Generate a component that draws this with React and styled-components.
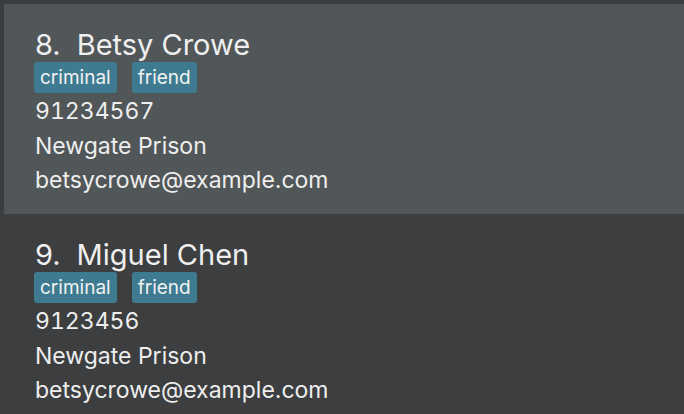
import React from 'react'
import styled, { createGlobalStyle } from 'styled-components'

const PERSONS = [
  {
    index: 8,
    name: 'Betsy Crowe',
    tags: ['criminal', 'friend'],
    phone: '91234567',
    address: 'Newgate Prison',
    email: 'betsycrowe@example.com',
  },
  {
    index: 9,
    name: 'Miguel Chen',
    tags: ['criminal', 'friend'],
    phone: '9123456',
    address: 'Newgate Prison',
    email: 'betsycrowe@example.com',
  },
]

const GlobalStyle = createGlobalStyle`
  html, body {
    margin: 0;
    padding: 0;
    height: 100%;
    overflow: hidden;
    background: #3c3e40;
  }

  body {
    font-family: Inter, "Open Sans", sans-serif;
    color: #ececec;
  }
`

export default function App() {
  return (
    <>
      <GlobalStyle />
      <PersonList>
        {PERSONS.map((p, i) => (
          <Card key={p.index} selected={i === 0}>
            <Name>
              <span className="index">{p.index}.</span>
              {p.name}
            </Name>
            <Tags>
              {p.tags.map((t) => (
                <Tag key={t}>{t}</Tag>
              ))}
            </Tags>
            <Detail numeric>{p.phone}</Detail>
            <Detail>{p.address}</Detail>
            <Detail>{p.email}</Detail>
          </Card>
        ))}
      </PersonList>
    </>
  )
}

const PersonList = styled.div`
  display: flex;
  flex-direction: column;
  padding: 4px 0 0 4px;
  height: 414px;
  box-sizing: border-box;
  background: #3b3d3f;
`

const Card = styled.div`
  display: flex;
  flex-direction: column;
  align-items: flex-start;
  height: 210px;
  flex-shrink: 0;
  box-sizing: border-box;
  padding: 24px 0 0 31px;
  background: ${(p) => (p.selected ? '#515658' : '#3c3e40')};
`

const Name = styled.div`
  font-size: 29px;
  line-height: 34px;
  color: #efefef;
  white-space: pre;

  .index {
    margin-right: 16px;
  }
`

const Tags = styled.div`
  display: flex;
  gap: 15px;
  margin: 0 0 1px -1px;
`

const Tag = styled.span`
  display: inline-flex;
  align-items: center;
  height: 31px;
  padding: 0 6px;
  border-radius: 3px;
  background: #3e7b91;
  color: #f2f2f2;
  font-size: 19px;
`

const Detail = styled.div`
  font-size: 23px;
  line-height: 34.5px;
  color: #eeeeee;
  font-variant-numeric: ${(p) => (p.numeric ? 'tabular-nums' : 'normal')};
`
